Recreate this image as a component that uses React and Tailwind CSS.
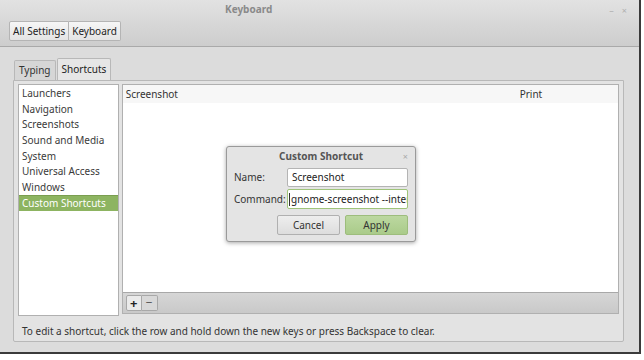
import React from "react";

const categories = [
  "Launchers",
  "Navigation",
  "Screenshots",
  "Sound and Media",
  "System",
  "Universal Access",
  "Windows",
  "Custom Shortcuts",
];

function App() {
  return (
    <div className="w-[644px] h-[360px] bg-white text-[10px] text-[#3c3c3c]" style={{ fontFamily: '"Noto Sans", "DejaVu Sans", sans-serif' }}>
      <div className="relative w-[641px] h-[354px] flex flex-col border-r-2 border-b-2 border-[#3a3a3a] bg-[#dcdcdc]">
        {/* title + toolbar */}
        <div className="h-[47px] bg-gradient-to-b from-[#e2e2e2] to-[#cdcdcd] border-b border-[#a9a9a9]">
          <div className="h-[19px] flex items-center relative">
            <div className="pl-[225px] font-bold text-[#8a8a8a]">Keyboard</div>
            <div className="absolute right-[12px] top-[4px] flex gap-[8px] text-[#b0b0b0] text-[9px]">
              <span>–</span>
              <span>×</span>
            </div>
          </div>
          <div className="flex pl-[9px] mt-[2px]">
            <div className="h-[20px] px-[3px] flex items-center border border-[#b4b4b4] rounded-l-[2px] bg-gradient-to-b from-[#f6f6f6] to-[#e4e4e4] text-[#222]">All Settings</div>
            <div className="h-[20px] px-[3px] flex items-center border border-l-0 border-[#b4b4b4] rounded-r-[2px] bg-gradient-to-b from-[#f6f6f6] to-[#e4e4e4] text-[#222]">Keyboard</div>
          </div>
        </div>

        {/* notebook */}
        <div className="px-[13px] pt-[11px] flex flex-col">
          <div className="flex items-end h-[22px] pl-[1px]">
            <div className="h-[20px] px-[4px] flex items-center border border-b-0 border-[#b8b8b8] rounded-t-[2px] bg-[#d6d6d6] text-[#333]">Typing</div>
            <div className="h-[22px] px-[4px] flex items-center border border-b-0 border-[#b8b8b8] rounded-t-[2px] bg-[#e6e6e6] text-[#222] ml-[1px]">Shortcuts</div>
          </div>
          <div className="w-[611px] h-[262px] border border-[#b8b8b8] rounded-b-[2px] bg-[#e3e3e3] flex flex-col">
            <div className="flex gap-[3px] px-[4px] pt-[3px] h-[235px]">
              <div className="w-[101px] h-[232px] bg-white border border-[#b0b0b0] pt-[1px]">
                {categories.map((c, i) => (
                  <div
                    key={c}
                    className={
                      "h-[15.6px] flex items-center pl-[3px] " +
                      (i === categories.length - 1 ? "bg-[#8db461] text-white border-t border-[#7a9e50]" : "text-[#3a3a3a]")
                    }
                  >
                    {c}
                  </div>
                ))}
              </div>
              <div className="w-[499px] h-[230px] flex flex-col border border-[#b0b0b0] bg-[#d0d0d0]">
                <div className="flex-1 bg-white flex flex-col">
                  <div className="h-[18px] flex items-center bg-[#f7f7f7] text-[#333]">
                    <div className="pl-[3px] w-[397px]">Screenshot</div>
                    <div>Print</div>
                  </div>
                </div>
                <div className="h-[21px] border-t border-[#a8a8a8] bg-gradient-to-b from-[#d6d6d6] to-[#c9c9c9] flex items-center pl-[3px]">
                  <div className="flex">
                    <div className="w-[16px] h-[16px] flex items-center justify-center border border-[#a8a8a8] rounded-l-[2px] bg-[#eaeaea] text-[#222] text-[13px] font-bold leading-none">+</div>
                    <div className="w-[16px] h-[16px] flex items-center justify-center border border-l-0 border-[#a8a8a8] rounded-r-[2px] bg-[#d8d8d8] text-[#555] text-[12px] leading-none">−</div>
                  </div>
                </div>
              </div>
            </div>
            <div className="pl-[8px] pt-[8px] text-[#333]">
              To edit a shortcut, click the row and hold down the new keys or press Backspace to clear.
            </div>
          </div>
        </div>

        {/* dialog */}
        <div className="absolute left-[226px] top-[146px] w-[190px] h-[96px] rounded-[3px] border border-[#9a9a9a] bg-[#e4e4e4] shadow-[0_1px_4px_rgba(0,0,0,0.35)] flex flex-col">
          <div className="h-[19px] flex items-center justify-center relative font-bold text-[#555]">
            Custom Shortcut
            <span className="absolute right-[7px] top-[3px] text-[#aaa] font-normal text-[9px]">×</span>
          </div>
          <div className="flex items-center h-[20px] mt-[1px] px-[7px]">
            <div className="w-[53px] text-[#333]">Name:</div>
            <div className="w-[121px] h-[19px] border border-[#b4b4b4] rounded-[2px] bg-white flex items-center pl-[4px] text-[#222]">Screenshot</div>
          </div>
          <div className="flex items-center h-[20px] mt-[2px] px-[7px]">
            <div className="w-[53px] text-[#333]">Command:</div>
            <div className="w-[121px] h-[20px] border border-[#9fc47a] rounded-[2px] bg-white flex items-center pl-[1px] text-[#222] overflow-hidden whitespace-nowrap">
              <span className="w-px h-[13px] bg-[#333] mr-[1px] shrink-0"></span>gnome-screenshot --inter
            </div>
          </div>
          <div className="flex justify-end gap-[5px] px-[7px] mt-[6px]">
            <div className="w-[63px] h-[20px] border border-[#b0b0b0] rounded-[2px] bg-gradient-to-b from-[#eeeeee] to-[#dddddd] flex items-center justify-center text-[#333]">Cancel</div>
            <div className="w-[63px] h-[20px] border border-[#9dbd7c] rounded-[2px] bg-gradient-to-b from-[#bcd8a0] to-[#aacb8a] flex items-center justify-center text-[#333]">Apply</div>
          </div>
        </div>
      </div>
    </div>
  );
}

export default App;
